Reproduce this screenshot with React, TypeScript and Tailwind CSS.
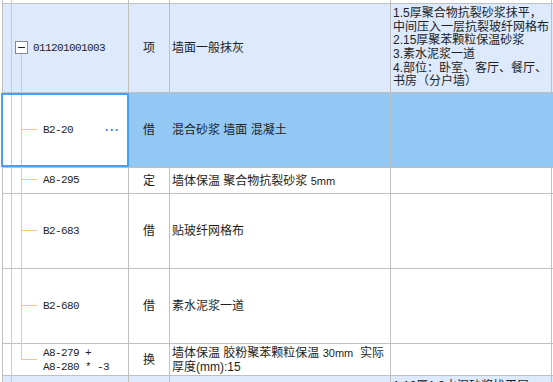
const grid = "border-[#c0c0c0]";

const cjk = "font-['Liberation_Sans','Noto_Sans_CJK_SC',sans-serif]";
const mono = "font-['Liberation_Mono','Noto_Sans_CJK_SC',monospace] text-[11px] tracking-[-0.6px]";

type Row = {
  h: string;
  bg?: string;
  code?: React.ReactNode;
  codePad?: string;
  type?: string;
  name?: React.ReactNode;
  feature?: React.ReactNode;
  align?: string;
};

const features = [
  "1.5厚聚合物抗裂砂浆抹平，",
  "中间压入一层抗裂玻纤网格布",
  "2.15厚聚苯颗粒保温砂浆",
  "3.素水泥浆一道",
  "4.部位：卧室、客厅、餐厅、",
  "书房（分户墙）",
];

const rows: Row[] = [
  { h: "h-[4px]" },
  {
    h: "h-[89px]",
    bg: "bg-[#dde9fd]",
    code: "011201001003",
    codePad: "pl-[30px]",
    type: "项",
    name: "墙面一般抹灰",
    feature: (
      <div className="leading-[13.7px]">
        {features.map((f) => (
          <div key={f} className="whitespace-nowrap">{f}</div>
        ))}
      </div>
    ),
  },
  {
    h: "h-[75px]",
    bg: "bg-[#93c8f5]",
    code: "B2-20",
    codePad: "pl-[40px]",
    type: "借",
    name: "混合砂浆 墙面 混凝土",
  },
  {
    h: "h-[26px]",
    code: "A8-295",
    codePad: "pl-[40px]",
    type: "定",
    name: (
      <span>
        墙体保温 聚合物抗裂砂浆 <span className="text-[11px]">5mm</span>
      </span>
    ),
  },
  { h: "h-[75px]", code: "B2-683", codePad: "pl-[40px]", type: "借", name: "贴玻纤网格布" },
  { h: "h-[75px]", code: "B2-680", codePad: "pl-[40px]", type: "借", name: "素水泥浆一道" },
  {
    h: "h-[32px]",
    code: (
      <div className="leading-[14px]">
        <div>A8-279 +</div>
        <div>A8-280 * -3</div>
      </div>
    ),
    codePad: "pl-[40px]",
    type: "换",
    name: (
      <div className="leading-[14px] whitespace-nowrap">
        <div>
          墙体保温 胶粉聚苯颗粒保温 <span className="text-[11px]">30mm</span>&nbsp;&nbsp;实际
        </div>
        <div>厚度(mm):15</div>
      </div>
    ),
  },
  {
    h: "h-[20px]",
    bg: "bg-[#dde9fd]",
    align: "items-start",
    feature: <div className="pt-[1px] whitespace-nowrap">1.10厚1:3水泥砂浆找平层，</div>,
  },
];

// connectors of the tree column
function TreeLines() {
  const branches = [129.5, 179.5, 230.5, 305.5, 359.5];
  return (
    <svg className="absolute left-0 top-0 pointer-events-none" width="40" height="382">
      <line x1="11.5" y1="0" x2="11.5" y2="382" stroke="#f8c27f" />
      <line x1="21.5" y1="53" x2="21.5" y2="360" stroke="#f8c27f" />
      {branches.map((y) => (
        <line key={y} x1="21" y1={y} x2="37" y2={y} stroke="#f8c27f" />
      ))}
      <rect x="15.5" y="41.5" width="12" height="12" fill="#fff" stroke="#8a8a8a" />
      <line x1="18" y1="47.5" x2="25" y2="47.5" stroke="#222" />
    </svg>
  );
}

export default function App() {
  return (
    <div className={`relative w-[553px] h-[382px] overflow-hidden bg-white text-[12px] text-[#1e1e1e] ${cjk}`}>
      <div className={`ml-[2px] border-l ${grid}`}>
        {rows.map((r, i) => (
          <div key={i} className={`flex ${r.h} border-b ${grid} ${r.bg ?? "bg-white"}`}>
            <div className={`w-[126px] shrink-0 border-r ${grid} flex ${r.align ?? "items-center"} ${r.codePad ?? ""} ${i === 2 ? "bg-white" : ""}`}>
              {r.code && <div className={mono}>{r.code}</div>}
            </div>
            <div className={`w-[41px] shrink-0 border-r ${grid} flex ${r.align ?? "items-center"} justify-center`}>
              {r.type}
            </div>
            <div className={`w-[221px] shrink-0 border-r ${grid} flex ${r.align ?? "items-center"} pl-[2px]`}>
              {r.name}
            </div>
            <div className={`w-[161px] shrink-0 border-r ${grid} flex ${r.align ?? "items-center"} pl-[2px] overflow-hidden`}>
              {r.feature}
            </div>
            <div className="flex-1" />
          </div>
        ))}
      </div>
      <TreeLines />
      {/* selected cell outline */}
      <div className="absolute left-[1px] top-[93px] w-[128px] h-[74px] border-2 border-[#4a9ef7] flex items-center justify-end pr-[7px]">
        <span className="text-[#3b82d6] font-bold tracking-[1px] leading-none">···</span>
      </div>
    </div>
  );
}
